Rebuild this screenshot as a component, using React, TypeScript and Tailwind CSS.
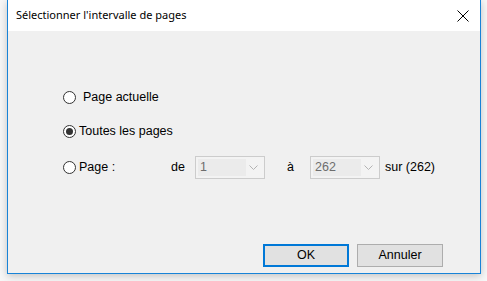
import React from "react";

function Radio({ checked }: { checked?: boolean }) {
  return (
    <span className="w-[13px] h-[13px] rounded-full border border-[#333333] bg-white flex items-center justify-center shrink-0">
      {checked && <span className="w-[7px] h-[7px] rounded-full bg-[#333333]" />}
    </span>
  );
}

function Combo({ value }: { value: string }) {
  return (
    <div className="w-[70px] h-[23px] border border-[#cccccc] bg-[#f3f3f3] flex items-center pl-[2px] pr-[6px]">
      <div className="w-[48px] h-[17px] bg-[#ebebeb] text-[#6d6d6d] pl-[2px] leading-[17px]">{value}</div>
      <svg className="ml-auto" width="9" height="6" viewBox="0 0 9 6">
        <path d="M0.5 0.5 L4.5 4.5 L8.5 0.5" fill="none" stroke="#b3b3b3" strokeWidth="1" />
      </svg>
    </div>
  );
}

export default function App() {
  return (
    <div className="w-[487px] h-[281px] bg-[#f7f7f7] overflow-hidden" style={{ fontFamily: "'Liberation Sans', Arial, sans-serif" }}>
      <div className="ml-[7px] w-[474px] h-[274px] border-x border-b border-[#1883d7] bg-[#f0f0f0] flex flex-col shadow-[0_2px_8px_rgba(0,0,0,0.22)]">
        <div className="h-[31px] bg-white flex items-center pl-[8px] pr-[11px] shrink-0">
          <span className="text-[11px] text-black" style={{ fontFamily: "'Noto Sans', 'Open Sans', sans-serif" }}>
            Sélectionner l'intervalle de pages
          </span>
          <svg className="ml-auto" width="12" height="12" viewBox="0 0 12 12">
            <path d="M0.5 0.5 L11.5 11.5 M11.5 0.5 L0.5 11.5" stroke="#000" strokeWidth="1" />
          </svg>
        </div>

        <div className="flex-1 flex flex-col text-[12.5px] text-black pl-[55px]">
          <div className="mt-[59px] h-[14px] flex items-center">
            <Radio />
            <span className="ml-[7px]">Page actuelle</span>
          </div>
          <div className="mt-[20px] h-[14px] flex items-center">
            <Radio checked />
            <span className="ml-[3px]">Toutes les pages</span>
          </div>
          <div className="mt-[18px] flex items-center">
            <Radio />
            <span className="ml-[3px] w-[92px]">Page :</span>
            <span className="w-[24px]">de</span>
            <Combo value="1" />
            <span className="ml-[22px] w-[23px]">à</span>
            <Combo value="262" />
            <span className="ml-[5px]">sur (262)</span>
          </div>

          <div className="mt-auto mb-[6px] flex gap-[8px] ml-[200px]">
            <button className="w-[86px] h-[23px] border-2 border-[#0078d7] bg-[#e1e1e1] text-[12.5px]">OK</button>
            <button className="w-[86px] h-[23px] border border-[#adadad] bg-[#e1e1e1] text-[12.5px]">Annuler</button>
          </div>
        </div>
      </div>
    </div>
  );
}
